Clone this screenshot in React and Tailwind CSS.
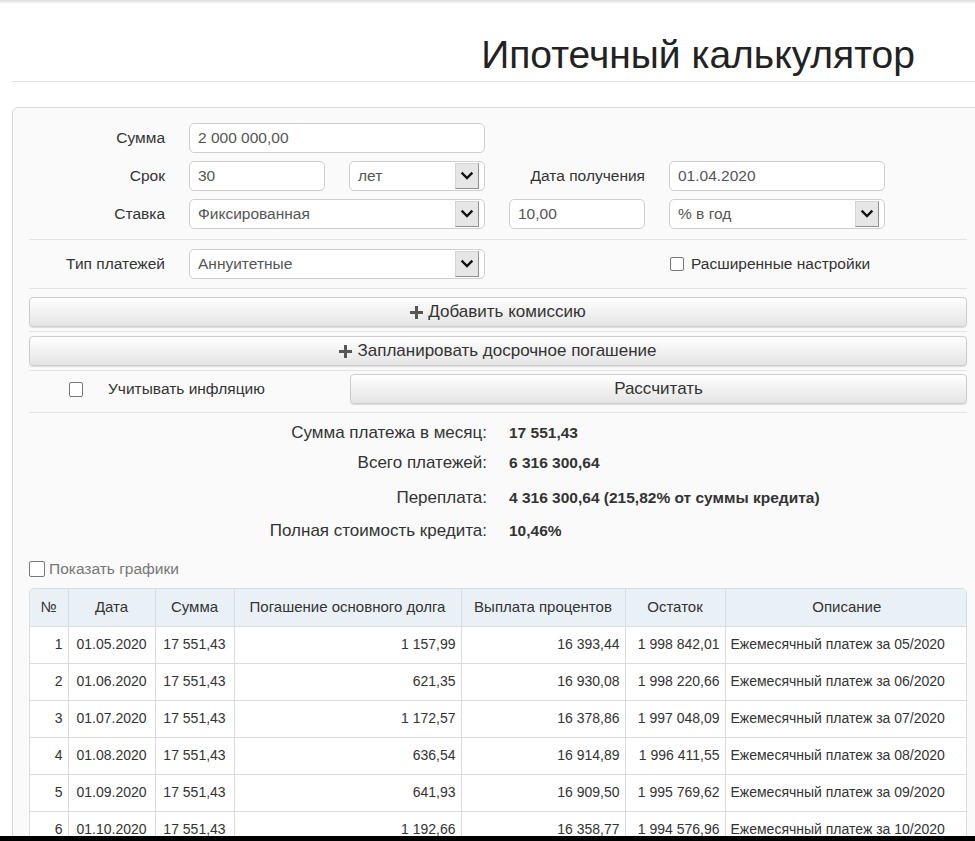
import React from 'react';

const font = { fontFamily: '"Liberation Sans", Arial, sans-serif' };

const Chevron = () => (
    <svg width="14" height="10" viewBox="0 0 14 10">
        <path d="M2.5 2.5 L7 7 L11.5 2.5" fill="none" stroke="#111" strokeWidth="2.4" strokeLinecap="square" />
    </svg>
);

const Plus = () => (
    <svg width="13" height="13" viewBox="0 0 13 13" className="mr-[5px]">
        <path d="M5 0 H8 V5 H13 V8 H8 V13 H5 V8 H0 V5 H5 Z" fill="#555" />
    </svg>
);

const Input = ({ value, w }) => (
    <div className={`${w} h-[30px] flex items-center pl-[8px] bg-white border border-[#cfcfcf] rounded-[5px] text-[15.5px] text-[#555]`}>
        {value}
    </div>
);

const Select = ({ value, w }) => (
    <div className={`${w} h-[30px] flex items-center pl-[8px] bg-white border border-[#cfcfcf] rounded-[5px] text-[15.5px] text-[#555]`}>
        <span>{value}</span>
        <div className="ml-auto mr-[5px] w-[24px] h-[26px] flex items-center justify-center bg-[#e6e6e6] border border-t-[#d4d4d4] border-l-[#d4d4d4] border-r-[#8f8f8f] border-b-[#8f8f8f]">
            <Chevron />
        </div>
    </div>
);

const Label = ({ children, w = 'w-[136px]' }) => (
    <div className={`${w} text-right text-[15.5px] text-[#333]`}>{children}</div>
);

const Checkbox = ({ size = 'w-[14px] h-[14px]' }) => (
    <div className={`${size} bg-white border border-[#777] rounded-[2px]`} />
);

const Button = ({ children, className = '' }) => (
    <div className={`h-[30px] flex items-center justify-center bg-linear-to-b from-white to-[#e4e4e4] border border-[#cdcdcd] rounded-[4px] shadow-[0_1px_1px_rgba(0,0,0,0.12)] text-[17px] text-[#333] ${className}`}>
        {children}
    </div>
);

const Divider = ({ className = '' }) => <div className={`h-px bg-[#e3e3e3] ${className}`} />;

const rows = [
    ['1', '01.05.2020', '17 551,43', '1 157,99', '16 393,44', '1 998 842,01', 'Ежемесячный платеж за 05/2020'],
    ['2', '01.06.2020', '17 551,43', '621,35', '16 930,08', '1 998 220,66', 'Ежемесячный платеж за 06/2020'],
    ['3', '01.07.2020', '17 551,43', '1 172,57', '16 378,86', '1 997 048,09', 'Ежемесячный платеж за 07/2020'],
    ['4', '01.08.2020', '17 551,43', '636,54', '16 914,89', '1 996 411,55', 'Ежемесячный платеж за 08/2020'],
    ['5', '01.09.2020', '17 551,43', '641,93', '16 909,50', '1 995 769,62', 'Ежемесячный платеж за 09/2020'],
    ['6', '01.10.2020', '17 551,43', '1 192,66', '16 358,77', '1 994 576,96', 'Ежемесячный платеж за 10/2020'],
];

const align = ['text-right', 'text-center', 'text-center', 'text-right', 'text-right', 'text-right', 'text-left'];
const widths = [38, 87, 79, 227, 164, 100, 243];
const headers = ['№', 'Дата', 'Сумма', 'Погашение основного долга', 'Выплата процентов', 'Остаток', 'Описание'];

const summary = [
    ['Сумма платежа в месяц:', '17 551,43', 'mt-[10px]'],
    ['Всего платежей:', '6 316 300,64', 'mt-[10px]'],
    ['Переплата:', '4 316 300,64 (215,82% от суммы кредита)', 'mt-[15px]'],
    ['Полная стоимость кредита:', '10,46%', 'mt-[13px]'],
];

export default function App() {
    return (
        <div className="w-[975px] h-[841px] overflow-hidden flex flex-col bg-white text-[#333]" style={font}>
            <div className="flex-1 overflow-hidden">
                {/* top shade */}
                <div className="h-[4px] bg-linear-to-b from-[#dcdcdc] to-white" />

                <div className="mt-[29px] h-[44px] flex items-center justify-end pr-[60px] text-[39px] leading-[44px] text-[#222]">
                    Ипотечный калькулятор
                </div>
                <div className="mt-[4px] ml-[12px] h-px bg-[#e3e3e3]" />

                {/* main panel */}
                <div className="mt-[25px] ml-[12px] w-[990px] border border-[#d9d9d9] rounded-[6px] bg-[#fafafa] pl-[16px] pt-[15px] pb-[40px]">
                    <div className="w-[938px]">
                        <div className="flex items-center">
                            <Label>Сумма</Label>
                            <div className="ml-[24px]"><Input value="2 000 000,00" w="w-[296px]" /></div>
                        </div>
                        <div className="flex items-center mt-[8px]">
                            <Label>Срок</Label>
                            <div className="ml-[24px]"><Input value="30" w="w-[136px]" /></div>
                            <div className="ml-[24px]"><Select value="лет" w="w-[136px]" /></div>
                            <Label w="w-[160px]">Дата получения</Label>
                            <div className="ml-[24px]"><Input value="01.04.2020" w="w-[216px]" /></div>
                        </div>
                        <div className="flex items-center mt-[8px]">
                            <Label>Ставка</Label>
                            <div className="ml-[24px]"><Select value="Фиксированная" w="w-[296px]" /></div>
                            <div className="ml-[24px]"><Input value="10,00" w="w-[136px]" /></div>
                            <div className="ml-[24px]"><Select value="% в год" w="w-[216px]" /></div>
                        </div>

                        <Divider className="mt-[10px]" />

                        <div className="flex items-center mt-[9px]">
                            <Label>Тип платежей</Label>
                            <div className="ml-[24px]"><Select value="Аннуитетные" w="w-[296px]" /></div>
                            <div className="ml-[185px] flex items-center">
                                <Checkbox />
                                <span className="ml-[7px] text-[15.5px]">Расширенные настройки</span>
                            </div>
                        </div>

                        <Divider className="mt-[9px]" />

                        <Button className="mt-[8px]"><Plus />Добавить комиссию</Button>
                        <Divider className="mt-[4px]" />
                        <Button className="mt-[4px]"><Plus />Запланировать досрочное погашение</Button>
                        <Divider className="mt-[4px]" />

                        <div className="flex items-center mt-[3px]">
                            <div className="w-[321px] flex items-center pl-[40px]">
                                <Checkbox size="w-[14px] h-[15px]" />
                                <span className="ml-[25px] text-[15.5px]">Учитывать инфляцию</span>
                            </div>
                            <Button className="flex-1">Рассчитать</Button>
                        </div>

                        <Divider className="mt-[8px]" />

                        {summary.map(([label, value, mt]) => (
                            <div key={label} className={`flex items-center h-[20px] ${mt}`}>
                                <div className="w-[458px] text-right text-[17px]">{label}</div>
                                <div className="ml-[22px] font-bold text-[15.5px]">{value}</div>
                            </div>
                        ))}

                        <div className="mt-[20px] flex items-center h-[16px]">
                            <Checkbox size="w-[16px] h-[16px]" />
                            <span className="ml-[4px] text-[15.5px] text-[#777]">Показать графики</span>
                        </div>

                        <div className="mt-[11px] border border-[#dcdcdc] rounded-[5px] overflow-hidden">
                            <table className="w-full table-fixed border-collapse text-[14px] text-[#333]">
                                <colgroup>
                                    {widths.map((w, i) => <col key={i} style={{ width: w }} />)}
                                </colgroup>
                                <thead>
                                    <tr className="bg-[#e9f1f6] h-[37px]">
                                        {headers.map((h, i) => (
                                            <th key={h} className={`font-normal text-center text-[15px] px-[5px] whitespace-nowrap border-[#dcdcdc] ${i > 0 ? 'border-l' : ''}`}>{h}</th>
                                        ))}
                                    </tr>
                                </thead>
                                <tbody>
                                    {rows.map((r) => (
                                        <tr key={r[0]} className="bg-white h-[37px] border-t border-[#dcdcdc]">
                                            {r.map((c, i) => (
                                                <td key={i} className={`${align[i]} px-[5px] whitespace-nowrap border-[#dcdcdc] ${i > 0 ? 'border-l' : ''}`}>{c}</td>
                                            ))}
                                        </tr>
                                    ))}
                                </tbody>
                            </table>
                        </div>
                    </div>
                </div>
            </div>
            <div className="h-[5px] bg-black" />
        </div>
    );
}
